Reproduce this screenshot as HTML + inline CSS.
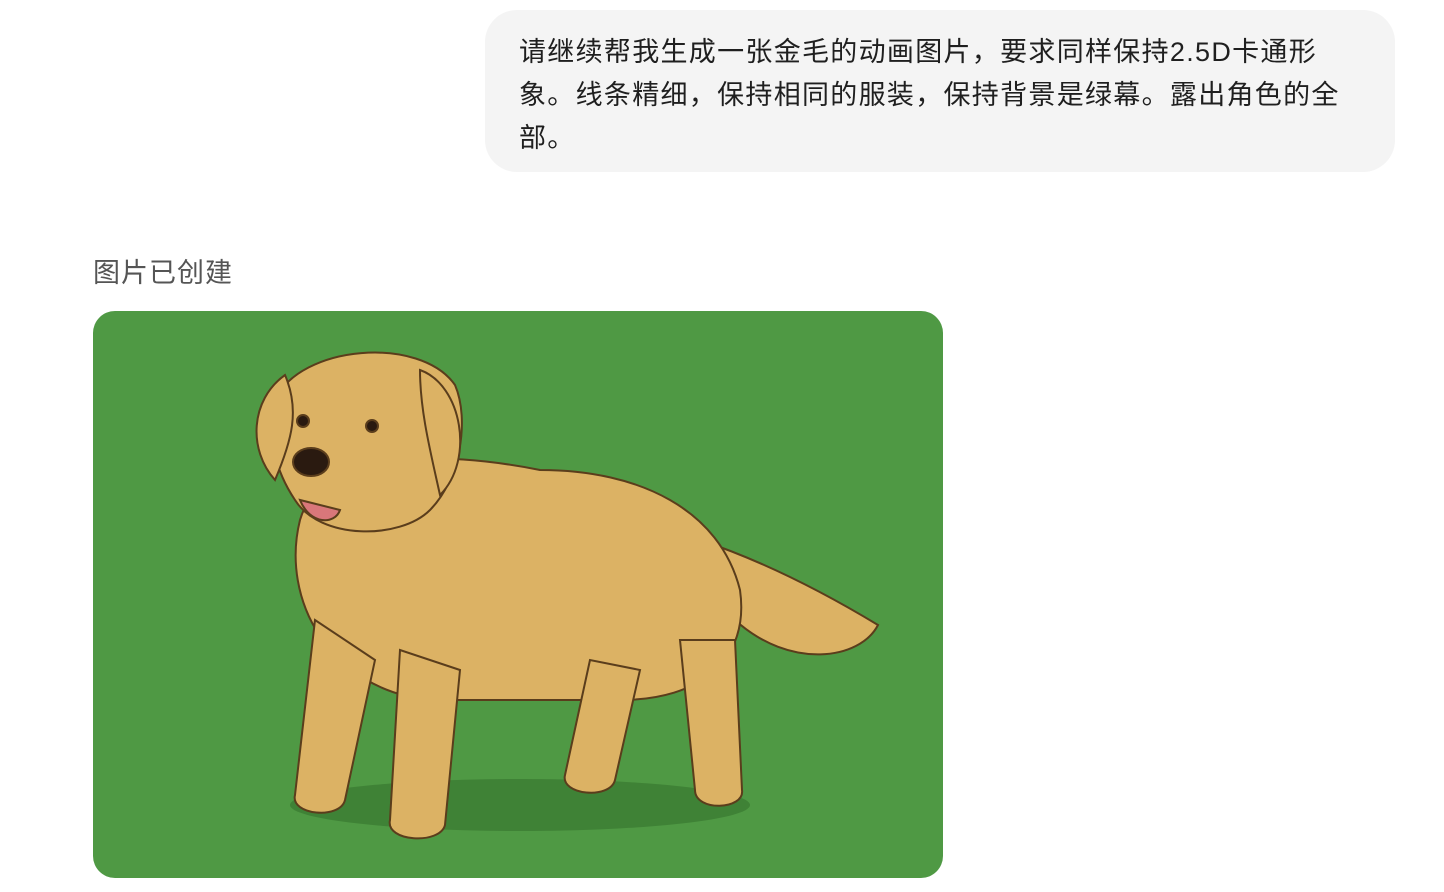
<!DOCTYPE html>
<html><head><meta charset="utf-8"><style>
html,body{margin:0;padding:0;background:#fff;width:1444px;height:892px;overflow:hidden}
body{font-family:"Liberation Sans","Noto Sans CJK SC",sans-serif;position:relative}
.bubble{position:absolute;left:485px;top:10px;width:910px;height:162px;background:#f4f4f4;border-radius:32px}
.bubble p{position:absolute;left:34px;top:21px;margin:0;font-size:27px;letter-spacing:1.3px;line-height:43px;color:#1f1f1f;white-space:nowrap}
.label{position:absolute;left:93px;top:251px;font-size:27px;letter-spacing:1px;color:#555}
.img{position:absolute;left:93px;top:311px;width:850px;height:567px;background:#4f9944;border-radius:22px;overflow:hidden}
</style></head><body>
<div class="bubble"><p>请继续帮我生成一张金毛的动画图片，要求同样保持2.5D卡通形<br>象。线条精细，保持相同的服装，保持背景是绿幕。露出角色的全<br>部。</p></div>
<div class="label">图片已创建</div>
<div class="img">
<svg width="850" height="567" viewBox="0 0 850 567">
<g transform="translate(-93,-311)" stroke="#5a3d1c" stroke-width="2" fill="#dcb264">
<ellipse cx="520" cy="805" rx="230" ry="26" fill="#3f8236" stroke="none"/>
<path d="M700 540 C760 560 820 590 878 625 C860 660 790 670 735 620 Z"/>
<path d="M300 520 C320 450 440 450 540 470 C640 470 720 510 740 590 C750 660 700 700 620 700 L430 700 C330 690 280 600 300 520 Z"/>
<path d="M315 620 L295 795 C290 815 340 820 345 800 L375 660 Z"/>
<path d="M400 650 L390 820 C385 842 440 845 445 825 L460 670 Z"/>
<path d="M590 660 L565 775 C560 795 610 800 615 780 L640 670 Z"/>
<path d="M680 640 L695 790 C695 812 745 810 742 790 L735 640 Z"/>
<path d="M275 400 C300 345 420 335 455 385 C470 420 460 480 430 510 C400 540 320 540 295 500 C275 470 268 440 275 400 Z"/>
<path d="M285 375 C250 400 248 450 275 480 C292 440 300 410 285 375 Z"/>
<path d="M420 370 C462 385 475 460 440 495 C430 450 420 410 420 370 Z"/>
<ellipse cx="311" cy="462" rx="18" ry="14" fill="#2a1a10"/>
<circle cx="303" cy="421" r="6" fill="#2a1a10"/>
<circle cx="372" cy="426" r="6" fill="#2a1a10"/>
<path d="M300 500 C310 525 335 525 340 510 Z" fill="#d9777a"/>
</g></svg>
</div>
</body></html>
